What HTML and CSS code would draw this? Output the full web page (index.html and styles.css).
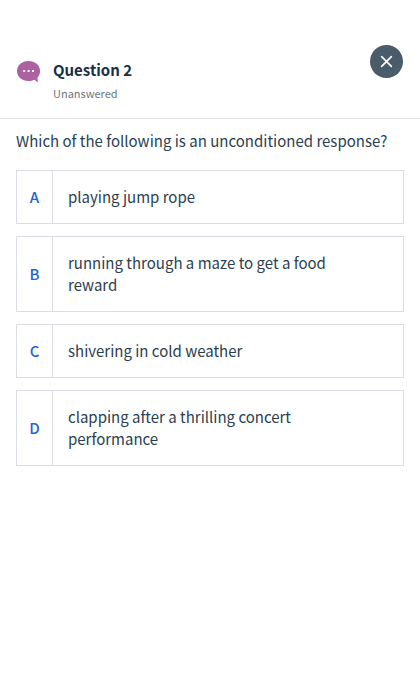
FILE: index.html
```html
<!DOCTYPE html>
<html lang="en">
<head>
<meta charset="UTF-8">
<meta name="viewport" content="width=device-width, initial-scale=1.0">
<title>Question 2</title>
<link rel="stylesheet" href="styles.css">
</head>
<body>
<header class="header">
  <svg class="header-icon" viewBox="0 0 24 22" aria-hidden="true">
    <path fill="#ad61a1" d="M11.500 0C5 0 0 4.300 0 10s5 10 11.500 10c2.200 0 4.200-.5 5.900-1.300L20.700 21.500l-.2-4.900c1.700-1.800 2.600-4 2.600-6.600C23.100 4.300 18 0 11.500 0z"/>
    <path fill="#fff" d="M6.200 9h2v2h-2zM10.600 9h2v2h-2zM15 9h2v2h-2z"/>
  </svg>
  <div class="header-text">
    <h1 class="title">Question 2</h1>
    <p class="status">Unanswered</p>
  </div>
  <button class="close-button" type="button" aria-label="Close">
    <svg viewBox="0 0 12 12" aria-hidden="true">
      <path d="M1.500 1.500l9 9M10.500 1.500l-9 9"/>
    </svg>
  </button>
</header>

<main class="content">
  <h2 class="question">Which of the following is an unconditioned response?</h2>
  <div class="options">
    <button class="option" type="button">
      <span class="letter">A</span>
      <span class="answer">playing jump rope</span>
    </button>
    <button class="option" type="button">
      <span class="letter">B</span>
      <span class="answer">running through a maze to get a food reward</span>
    </button>
    <button class="option" type="button">
      <span class="letter">C</span>
      <span class="answer">shivering in cold weather</span>
    </button>
    <button class="option" type="button">
      <span class="letter">D</span>
      <span class="answer">clapping after a thrilling concert performance</span>
    </button>
  </div>
</main>
</body>
</html>
```

FILE: styles.css
```css
* {
  box-sizing: border-box;
}

body {
  margin: 0;
  background-color: #fff;
  color: #2b3e51;
  font-family: "Noto Sans CJK SC", "Open Sans", sans-serif;
  font-size: 15px;
  line-height: 22px;
}

.header {
  display: flex;
  align-items: flex-start;
  padding: 45px 17px 14px;
  border-bottom: 1px solid #e3e4e6;
}

.header-icon {
  width: 24px;
  height: 22px;
  margin-top: 16px;
}

.header-text {
  flex: 1;
  padding: 13px 12px 0;
}

.title {
  margin: 0;
  color: #1a2f45;
  font-size: 15px;
  font-weight: 700;
  line-height: 24px;
}

.status {
  margin: 0;
  color: #6b7780;
  font-size: 11px;
}

.close-button {
  display: flex;
  align-items: center;
  justify-content: center;
  width: 33px;
  height: 33px;
  padding: 0;
  border: none;
  border-radius: 50%;
  background-color: #4a5b69;
  cursor: pointer;
}

.close-button svg {
  width: 13px;
  height: 13px;
  fill: none;
  stroke: #fff;
  stroke-width: 1.5;
  stroke-linecap: round;
}

.content {
  padding: 11px 16px;
}

.question {
  margin: 0 0 18px;
  font-size: 15px;
  font-weight: 400;
}

.options {
  display: flex;
  flex-direction: column;
  gap: 12px;
}

.option {
  display: flex;
  padding: 0;
  border: 1px solid #dadee4;
  background-color: #fff;
  color: inherit;
  font: inherit;
  text-align: left;
  cursor: pointer;
}

.option:hover {
  background-color: #f7f9fb;
}

.letter {
  display: flex;
  align-items: center;
  justify-content: center;
  width: 36px;
  border-right: 1px solid #dadee4;
  color: #2264d1;
  font-weight: 500;
}

.answer {
  flex: 1;
  padding: 15px 32px 15px 15px;
}
```
